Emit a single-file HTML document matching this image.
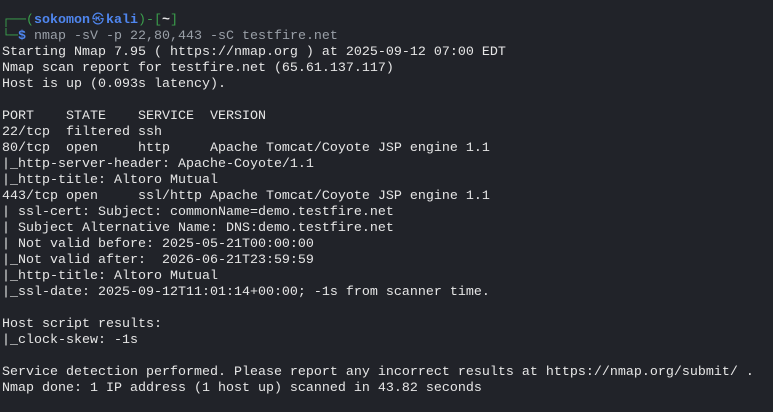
<!DOCTYPE html>
<html><head><style>
html,body{margin:0;padding:0;background:#212329;width:773px;height:412px;overflow:hidden}
pre{margin:0;position:absolute;left:2px;top:12px;font-family:"Liberation Mono","DejaVu Sans Mono",monospace;font-size:13.33px;line-height:16px;color:#e6e6e6;white-space:pre}
.g{color:#3b9e4c}.b{color:#4f86ef;font-weight:bold}.c{color:#9aa0a8}
.at{display:inline-block;width:16px;text-align:center;font-weight:normal;font-size:12px}
</style></head><body>
<pre><span class="g">┌──(</span><span class="b">sokomon<span class="at">㉿</span>kali</span><span class="g">)-[</span><b>~</b><span class="g">]</span>
<span class="g">└─</span><span class="b">$</span> <span class="c">nmap -sV -p 22,80,443 -sC testfire.net</span>
Starting Nmap 7.95 ( https://nmap.org ) at 2025-09-12 07:00 EDT
Nmap scan report for testfire.net (65.61.137.117)
Host is up (0.093s latency).

PORT    STATE    SERVICE  VERSION
22/tcp  filtered ssh
80/tcp  open     http     Apache Tomcat/Coyote JSP engine 1.1
|_http-server-header: Apache-Coyote/1.1
|_http-title: Altoro Mutual
443/tcp open     ssl/http Apache Tomcat/Coyote JSP engine 1.1
| ssl-cert: Subject: commonName=demo.testfire.net
| Subject Alternative Name: DNS:demo.testfire.net
| Not valid before: 2025-05-21T00:00:00
|_Not valid after:  2026-06-21T23:59:59
|_http-title: Altoro Mutual
|_ssl-date: 2025-09-12T11:01:14+00:00; -1s from scanner time.

Host script results:
|_clock-skew: -1s

Service detection performed. Please report any incorrect results at https://nmap.org/submit/ .
Nmap done: 1 IP address (1 host up) scanned in 43.82 seconds</pre>
</body></html>
